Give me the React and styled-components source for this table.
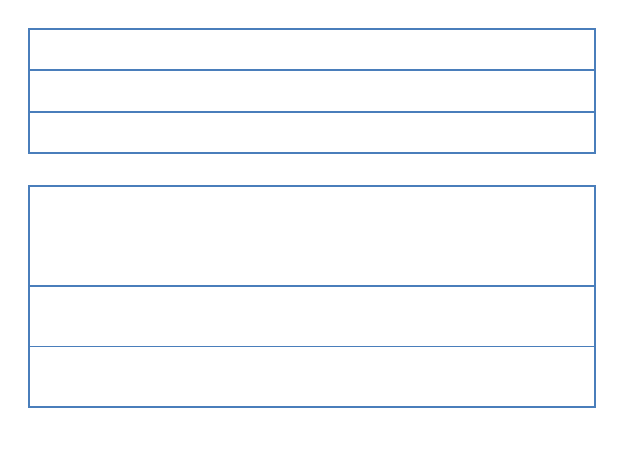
import styled, { createGlobalStyle } from "styled-components";

const GlobalStyle = createGlobalStyle`
  html, body {
    margin: 0;
    padding: 0;
    background: #fff;
    font-family: "Liberation Sans", Arial, sans-serif;
  }
`;

const Page = styled.div`
  display: flex;
  flex-direction: column;
  gap: 31px;
  padding: 28px 0 0 28px;
  width: 568px;
`;

const Table = styled.div`
  display: flex;
  flex-direction: column;
  border: 2px solid #4a7ebb;
`;

const Row = styled.div`
  height: ${(p) => p.$h}px;
  border-bottom: ${(p) => p.$line ?? 0}px solid #4a7ebb;
`;

export default function App() {
  return (
    <>
      <GlobalStyle />
      <Page>
        <Table>
          <Row $h={39} $line={2} />
          <Row $h={40} $line={2} />
          <Row $h={39} />
        </Table>
        <Table>
          <Row $h={98} $line={2} />
          <Row $h={59} $line={1} />
          <Row $h={59} />
        </Table>
      </Page>
    </>
  );
}
